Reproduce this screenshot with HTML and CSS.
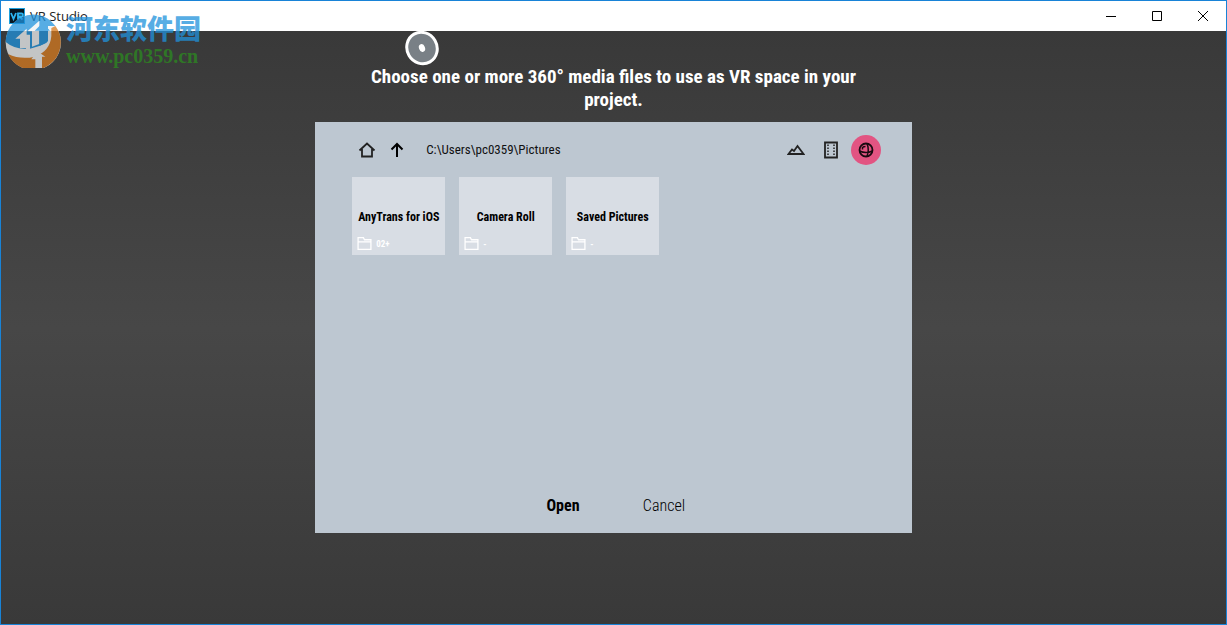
FILE: index.html
```html
<!DOCTYPE html>
<html lang="en">
<head>
    <meta charset="UTF-8">
    <meta name="viewport" content="width=device-width, initial-scale=1.0">
    <title>VR Studio</title>
    <link rel="stylesheet" href="styles.css">
</head>
<body>
    <div class="window">
        <header class="titlebar">
            <svg class="app-icon" viewBox="0 0 16 16">
                <rect x=".5" y=".5" width="15" height="15" fill="#071722" stroke="#1e9fdc"/>
                <path d="M2 5l2.500 6L7 5M9 11.500V5.500h3.500q1.500 0 1.500 1.500t-1.500 1.500H10l3.500 3" fill="none" stroke="#2cb5f2" stroke-width="1.800"/>
            </svg>
            <span class="app-name">VR Studio</span>
            <div class="window-buttons">
                <button type="button" aria-label="Minimize"><svg viewBox="0 0 12 12"><path d="M1 6.500h10"/></svg></button>
                <button type="button" aria-label="Maximize"><svg viewBox="0 0 12 12"><path d="M1.500 1.500h9v9h-9z"/></svg></button>
                <button type="button" aria-label="Close"><svg viewBox="0 0 12 12"><path d="M1 1l10 10M11 1L1 11"/></svg></button>
            </div>
        </header>

        <main class="scene">
            <h1>Choose one or more 360° media files to use as VR space in your project.</h1>

            <section class="picker">
                <div class="toolbar">
                    <button type="button" class="tool" aria-label="Home">
                        <svg viewBox="0 0 18 18"><path d="M1.500 9.500L9 2.500l7.500 7M4 8v7.500h10V8" stroke="#222" stroke-width="1.800"/></svg>
                    </button>
                    <button type="button" class="tool" aria-label="Up">
                        <svg viewBox="0 0 18 18"><path d="M9 16V3M3.500 8.500L9 3l5.500 5.500" stroke="#000" stroke-width="2"/></svg>
                    </button>
                    <span class="path">C:\Users\pc0359\Pictures</span>
                    <div class="filters">
                        <button type="button" class="filter" aria-label="Photos">
                            <svg viewBox="0 0 18 18"><path d="M1.500 13L5 8.500l2 1.500 3.500-5 6 8z" stroke="#222" stroke-width="1.800"/></svg>
                        </button>
                        <button type="button" class="filter" aria-label="Videos">
                            <svg viewBox="0 0 18 18">
                                <path d="M3 1.500h12v15H3z" stroke="#222" stroke-width="1.800"/>
                                <path d="M6 3.500v12M12 3.500v12" stroke="#222" stroke-width="1.500" stroke-dasharray="1.500 1.500"/>
                            </svg>
                        </button>
                        <button type="button" class="filter active" aria-label="360° media">
                            <svg viewBox="0 0 18 18">
                                <circle cx="9" cy="9" r="6.500" stroke="#190a10" stroke-width="1.800"/>
                                <path d="M10 2.500q2.500 6.500 0 13M2.500 10q6.500 3 13 0M5.500 8.500V6.500q1-1 3-1" stroke="#190a10" stroke-width="1.500"/>
                            </svg>
                        </button>
                    </div>
                </div>

                <div class="folders">
                    <button type="button" class="folder">
                        <span class="name">AnyTrans for iOS</span>
                        <span class="count"><svg viewBox="0 0 14 14"><path d="M1 12.500V1.500h5l1 2h6v9zM1 5.500h12"/></svg>02+</span>
                    </button>
                    <button type="button" class="folder">
                        <span class="name">Camera Roll</span>
                        <span class="count"><svg viewBox="0 0 14 14"><path d="M1 12.500V1.500h5l1 2h6v9zM1 5.500h12"/></svg>-</span>
                    </button>
                    <button type="button" class="folder">
                        <span class="name">Saved Pictures</span>
                        <span class="count"><svg viewBox="0 0 14 14"><path d="M1 12.500V1.500h5l1 2h6v9zM1 5.500h12"/></svg>-</span>
                    </button>
                </div>

                <div class="actions">
                    <button type="button" class="open">Open</button>
                    <button type="button" class="cancel">Cancel</button>
                </div>
            </section>
        </main>

        <svg class="pointer" viewBox="0 0 36 36">
            <ellipse cx="18" cy="18" rx="15" ry="16" transform="rotate(-30 18 18)" fill="#798086" stroke="#fff" stroke-width="3"/>
            <ellipse cx="18" cy="18" rx="3" ry="4" transform="rotate(-20 18 18)" fill="#fff"/>
        </svg>

        <div class="watermark">
            <svg viewBox="12 18 174 174">
                <circle cx="100" cy="115" r="83" fill="#f1f4f5"/>
                <!-- blue half with the two arrows -->
                <path d="M17 114A83 83 0 0 1 152 50L166 66H144V112Q122 128 90 134V92H78V134Q44 136 17 114z" fill="#2092dc"/>
                <path d="M46 104L80 74V132H60V104zM96 128V82H82L118 50V120z" fill="#f1f4f5"/>
                <path d="M104 80L128 56 150 80H140V116L118 126V80z" fill="#2092dc"/>
                <!-- orange half -->
                <path d="M166 66A83 83 0 0 1 180 134 83 83 0 0 1 24 150Q62 168 104 158 150 142 154 96V72z" fill="#d77a1f"/>
                <path d="M94 166L112 142 136 158H126V194H106V166z" fill="#f1f4f5"/>
            </svg>
            <div>
                <div class="site">河东软件园</div>
                <div class="url">www.pc0359.cn</div>
            </div>
        </div>
    </div>
</body>
</html>
```
FILE: styles.css
```css
* {
    box-sizing: border-box;
}

body {
    margin: 0;
    font-family: "Roboto Condensed", Roboto, sans-serif;
}

button {
    padding: 0;
    border: 0;
    background: none;
    font: inherit;
    color: inherit;
    cursor: pointer;
}

svg {
    display: block;
    fill: none;
}

.window {
    position: relative;
    display: flex;
    flex-direction: column;
    min-height: 100vh;
    border: 1px solid #1883d7;
}

.titlebar {
    display: flex;
    align-items: center;
    height: 30px;
    padding-left: 8px;
    background: #fff;
}

.app-icon {
    width: 16px;
    height: 16px;
}

.app-name {
    margin-left: 5px;
    font: 13px/16px "Open Sans", sans-serif;
    color: #222;
}

.window-buttons {
    display: flex;
    margin-left: auto;
}

.window-buttons button {
    display: grid;
    place-items: center;
    width: 46px;
    height: 30px;
}

.window-buttons svg {
    width: 12px;
    height: 12px;
    stroke: #000;
}

.scene {
    flex: 1;
    display: flex;
    flex-direction: column;
    align-items: center;
    padding: 34px 16px 16px;
    background: linear-gradient(#393939, #474747 50%, #393939);
}

h1 {
    max-width: 510px;
    margin: 0 0 11px;
    font-size: 19px;
    line-height: 23px;
    font-weight: 700;
    text-align: center;
    color: #fff;
}

.picker {
    display: flex;
    flex-direction: column;
    width: 50%;
    min-height: 411px;
    padding: 12px 31px 12px 37px;
    background: #bdc7d1;
}

.toolbar {
    display: flex;
    align-items: center;
    height: 31px;
}

.tool {
    width: 30px;
}

.tool svg,
.filter svg {
    width: 18px;
    height: 18px;
    margin: auto;
}

.path {
    margin-left: 14px;
    font-size: 13px;
    color: #111;
}

.filters {
    display: flex;
    gap: 5px;
    margin-left: auto;
}

.filter {
    width: 30px;
    height: 30px;
    border-radius: 50%;
}

.filter.active {
    background: #e25482;
}

.folders {
    display: flex;
    flex-wrap: wrap;
    gap: 14px;
    margin-top: 12px;
}

.folder {
    display: flex;
    flex-direction: column;
    justify-content: space-between;
    width: 93px;
    height: 78px;
    padding: 32px 5px 4px;
    background: #d8dde4;
}

.name {
    width: 100%;
    font-size: 12px;
    line-height: 16px;
    font-weight: 700;
    white-space: nowrap;
    text-align: center;
    color: #000;
}

.count {
    display: flex;
    align-items: center;
    gap: 4px;
    font-size: 9px;
    font-weight: 700;
    color: #fff;
}

.count svg {
    width: 15px;
    height: 15px;
    stroke: #fff;
    stroke-width: 1.2;
}

.actions {
    display: grid;
    grid-template-columns: 64px 64px;
    gap: 37px;
    justify-content: center;
    margin: auto 6px 0 0;
    font-size: 16px;
    line-height: 30px;
    color: #000;
}

.open {
    font-weight: 700;
}

.cancel {
    font-weight: 300;
}

.pointer {
    position: absolute;
    top: 29px;
    left: 403px;
    width: 36px;
    height: 36px;
}

.watermark {
    position: absolute;
    top: 9px;
    left: 3px;
    display: flex;
    gap: 4px;
    opacity: 0.75;
    pointer-events: none;
}

.watermark svg {
    width: 58px;
    height: 58px;
}

.site {
    font: 900 27px/36px "Noto Sans CJK SC", sans-serif;
    color: #2092dc;
}

.url {
    font: 700 20px/20px "Liberation Serif", serif;
    color: #2c8a20;
}
```
